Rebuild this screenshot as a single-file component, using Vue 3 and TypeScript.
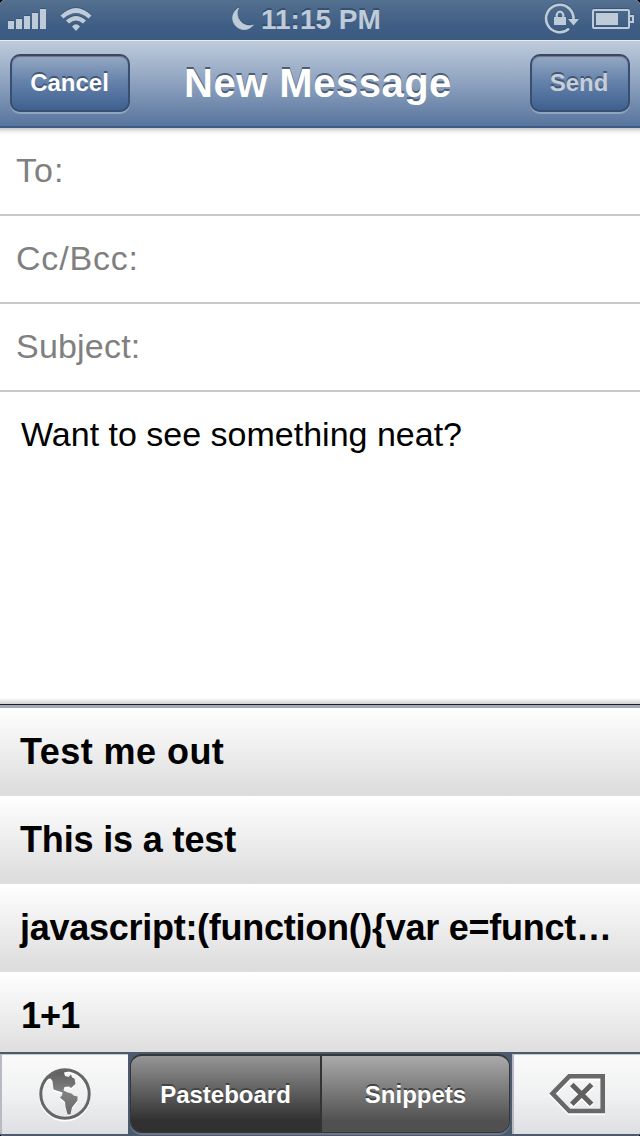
<script setup lang="ts">
interface Clip { text: string; kind: string }

const fields = [
  { label: 'To:', kind: 'to' },
  { label: 'Cc/Bcc:', kind: 'cc' },
  { label: 'Subject:', kind: 'subject' },
]
const clips: Clip[] = [
  { text: 'Test me out', kind: 'plain' },
  { text: 'This is a test', kind: 'phrase' },
  { text: 'javascript:(function(){var e=funct…', kind: 'code' },
  { text: '1+1', kind: 'sum' },
]
</script>

<template>
  <div class="phone">
    <header class="status">
      <svg class="signal" width="86" height="30" viewBox="0 0 86 30">
        <g class="ink">
          <path d="M0 21h6v8H0zM8 19h6v10H8zM16 16h6v13h-6zM24 13h6v16h-6zM32 9h6v20h-6z" />
          <path d="M52.500 15.500Q68 .5 83.500 15.500L80.500 18.500Q68 7.500 55.500 18.500z" />
          <path d="M58 20.500Q68 11.500 78 20.500L75 23.500Q68 17.500 61 23.500z" />
          <path d="M64 26.500Q68 22 72 26.500L68 31z" />
        </g>
      </svg>
      <div class="clock">
        <svg width="22" height="22" viewBox="0 0 22 22"><path class="ink" d="M6.500 0A11.500 11.500 0 1 0 21.300 17A12.300 12.300 0 0 1 6.500 0z" /></svg>
        <span>11:15 PM</span>
      </div>
      <svg class="power" width="90" height="34" viewBox="0 0 90 34">
        <path class="line" d="M25 25.600A13.700 13.700 0 1 1 29.400 17" />
        <path class="ink" d="M24 16h11l-5.500 6.500zM10 14h12v8H10z" />
        <path class="lock" d="M12.700 14v-2a3.300 3.300 0 0 1 6.600 0v2" />
        <rect class="case" x="49" y="7" width="36" height="18" rx="1" />
        <path class="ink" d="M52 10h22v12H52z" />
        <path class="case" d="M85 13h4v6h-4" />
      </svg>
    </header>

    <nav class="nav">
      <button class="btn cancel">Cancel</button>
      <h1>New Message</h1>
      <button class="btn send">Send</button>
    </nav>

    <main class="compose">
      <div v-for="f in fields" :key="f.kind" class="field"><span :class="f.kind">{{ f.label }}</span></div>
      <p class="body"><span>Want to see something neat?</span></p>
    </main>

    <section class="keyboard">
      <div class="clips">
        <div v-for="c in clips" :key="c.kind" class="clip"><span :class="c.kind">{{ c.text }}</span></div>
      </div>
      <div class="bar">
        <div class="key globe">
          <svg width="56" height="56" viewBox="0 0 56 56">
            <defs>
              <linearGradient id="metal" x1="0" y1="0" x2="0" y2="1"><stop offset="0" stop-color="#5c5c5c" /><stop offset=".5" stop-color="#828282" /><stop offset="1" stop-color="#686868" /></linearGradient>
              <path id="land" d="M9.500 13Q16 5 27 3.800L31.500 5.500 27 6.500 28 10 31.500 11 34 8.500 35 11.500 37.500 12.500 38.500 18 34 22 32 20.500 27.500 21 26.500 24.500 29.500 26 35 27.800 36.500 29.500 40.500 30.500 40.500 34.500 35 41.500 33.500 48.500 30.500 48.500 28.500 41 28 36 23 31.500 25 29.500 25.500 26.500 21 25 16.500 23.500 15.500 15 13.500 12.500z" />
            </defs>
            <circle class="ring-light" cx="28" cy="29.800" r="24.200" />
            <use class="emboss" href="#land" y="1.800" />
            <use class="metal" href="#land" />
            <circle class="ring" cx="28" cy="28" r="24.200" />
          </svg>
        </div>
        <div class="tabs">
          <div class="tab active"><span>Pasteboard</span></div>
          <div class="tab"><span>Snippets</span></div>
        </div>
        <div class="key delete">
          <svg width="58" height="44" viewBox="0 0 58 44">
            <path class="del-light" d="M20.300 6.300H53.700V41H20.300L3.500 23.600z" />
            <path class="x-light" d="M22.800 14.500L42.600 34.300M42.600 14.500L22.800 34.300" />
            <path class="del" d="M20.300 4.300H53.700V39H20.300L3.500 21.600z" />
            <path class="x" d="M22.800 12.500L42.600 32.300M42.600 12.500L22.800 32.300" />
          </svg>
        </div>
      </div>
    </section>
  </div>
</template>

<style>
body { margin: 0; background: #000; }
</style>

<style scoped>
* { box-sizing: border-box; }
.phone { width: 640px; height: 1136px; display: flex; flex-direction: column; overflow: hidden; background: #fff; border-radius: 5px 5px 4px 4px; font-family: "Liberation Sans", Arial, sans-serif; }
svg { display: block; overflow: visible; }
span { white-space: pre; display: inline-block; }
.status { height: 40px; flex: none; display: grid; grid-template-columns: 232px 1fr 96px; background: linear-gradient(#54708f, #3f5e85 65%, #3c5a80); }
.signal { margin-left: 8px; }
.signal, .power { filter: drop-shadow(0 -1px 0 #3a5677); }
.ink { fill: #bfcbd9; }
.line, .case, .lock { fill: none; stroke: #bfcbd9; stroke-width: 2; }
.line { stroke-width: 2.600; }
.lock { stroke-width: 2.200; }
.clock { display: flex; gap: 7px; color: #bfcbd9; font: bold 28px/40px "Liberation Sans", sans-serif; text-shadow: 0 -2px 0 #36506f; }
.clock svg { margin-top: 8px; filter: drop-shadow(0 -1px 0 #36506f); }
.clock .ink { stroke: #bfcbd9; stroke-width: .8; }
.power { margin-top: 3px; }
.nav { height: 88px; flex: none; display: grid; grid-template-columns: 120px 1fr 100px; padding: 13px 10px 0; background: linear-gradient(#becbdb, #8fa3c0 48%, #57749c); border-top: 1px solid #e7edf3; border-bottom: 2px solid #3d5b84; }
h1 { margin: 0; padding-left: 54px; font-size: 40px; line-height: 58px; color: #fff; letter-spacing: .5px; white-space: nowrap; text-shadow: 0 -2px 0 #4c5d75; }
.btn { height: 58px; margin: 0; padding: 0 1px 0 0; border: 2px solid #37506f; border-top-color: #3c485b; border-radius: 10px; background: linear-gradient(#96a8c3, #6280a9 50%, #3f6090); color: #fff; font: bold 24px/54px "Liberation Sans", sans-serif; text-shadow: 0 -2px 0 #405675; box-shadow: 0 2px 0 #91a5be, inset 0 1px 1px #66758e; }
.send { color: #c5ced9; padding-right: 2px; }
.compose { height: 576px; flex: none; background: linear-gradient(#c8c8c8, #f3f3f3 4px, #fff 7px, #fff 570px, #d0d0d0 576px); }
.field { height: 88px; padding-left: 16px; border-bottom: 2px solid #c9c9c9; color: #808080; font-size: 34px; line-height: 85px; }
.to { letter-spacing: 1px; }
.cc { letter-spacing: .8px; }
.subject { letter-spacing: .2px; }
.body { margin: 0; padding-left: 21px; font-size: 34px; line-height: 85px; color: #000; }
.keyboard { height: 432px; flex: none; border-top: 1px solid #1c1d25; background: #a5a8b8; padding-top: 3px; display: flex; flex-direction: column; }
.clips { height: 344px; flex: none; overflow: hidden; }
.clip { height: 88px; padding-left: 20px; font-weight: bold; font-size: 36px; line-height: 88px; color: #000; background: linear-gradient(#fff, #dcdcdc 86px, #e1e1e1); }
.plain { letter-spacing: .45px; }
.phrase { letter-spacing: -.15px; }
.code { letter-spacing: -.27px; }
.sum { letter-spacing: -.9px; padding-left: 1px; }
.bar { height: 84px; flex: none; display: grid; grid-template-columns: 128px 384px 128px; background: #4c5a6e; padding: 2px 0; }
.key { background: linear-gradient(#fafafa, #f0f1f2 50%, #dddfe2); border-top: 1px solid #c5c7ce; border-left: 2px solid #b8bac2; }
.globe svg { margin: 11px 0 0 35px; }
.delete svg { margin: 17px 0 0 35px; }
.tabs { margin: 0 0 0 2px; width: 380px; display: grid; grid-template-columns: 191px 1fr; border-radius: 12px; border: 1px solid #34363a; border-top: 2px solid #34363a; overflow: hidden; box-shadow: 0 2px 0 #6d7785; height: 79px; }
.tab { background: linear-gradient(#aaa, #505050 85%); color: #fff; font-weight: bold; font-size: 24px; line-height: 77px; text-align: center; text-shadow: 0 -2px 0 #444; }
.active { background: linear-gradient(#969696, #303030 85%); border-right: 2px solid #333; }
.ring, .ring-light { fill: none; stroke: #666; stroke-width: 3; }
.ring-light { stroke: #fff; }
.metal { fill: url(#metal); }
.emboss { fill: #fff; }
.del, .del-light { fill: none; stroke: #686868; stroke-width: 4.600; }
.x, .x-light { fill: none; stroke: #606060; stroke-width: 5; }
.del-light, .x-light { stroke: #fff; }
</style>
